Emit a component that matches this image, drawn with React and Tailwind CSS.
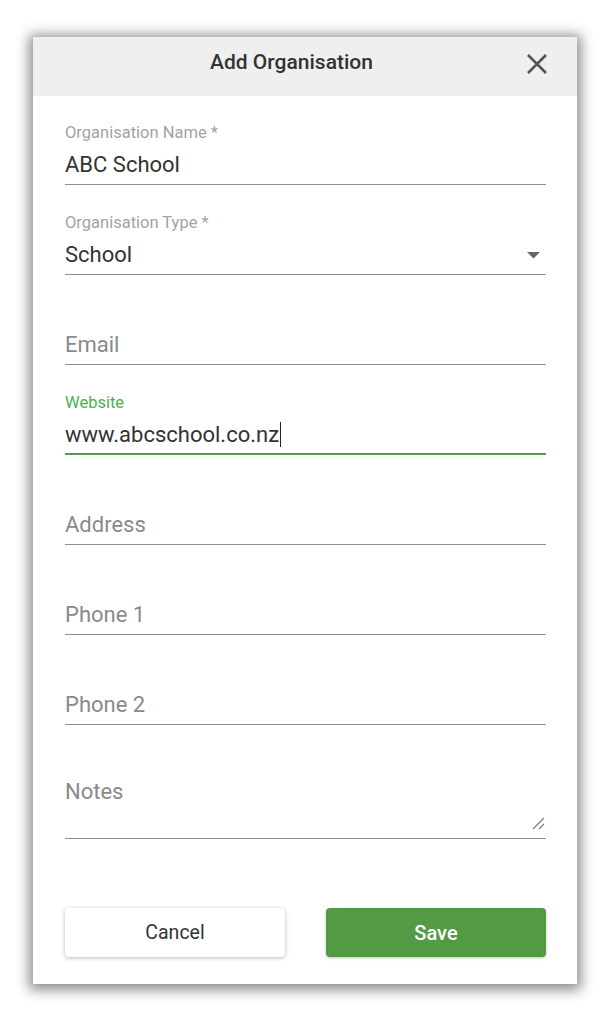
import { useState } from "react";

const font = { fontFamily: "Roboto, 'Liberation Sans', sans-serif" };

const Field = ({ label, value, placeholder, focused, select, caret }) => {
  return (
    <div className="mb-[28px]">
      <div
        className={`h-[20px] text-[16.5px] leading-[20px] ${focused ? "text-[#4caf50]" : "text-[#a3a3a3]"}`}
      >
        {label}
      </div>
      <div
        className={`mt-[3px] flex h-[39px] items-center justify-between ${focused ? "border-b-2 border-[#4e9f47]" : "border-b border-[#8f8f8f]"}`}
      >
        <div className="flex items-center text-[22px] leading-[26px]">
          {value ? (
            <span className="text-[#333]">{value}</span>
          ) : (
            <span className="text-[#8a8a8a]">{placeholder}</span>
          )}
          {caret && <span className="ml-[1px] inline-block h-[25px] w-[1px] bg-[#222]" />}
        </div>
        {select && (
          <svg width="13" height="7" viewBox="0 0 13 7" className="mr-[6px]">
            <path d="M0 0 L13 0 L6.5 6.5 Z" fill="#666" />
          </svg>
        )}
      </div>
    </div>
  );
};

export default function App() {
  const [fields] = useState([
    { label: "Organisation Name *", value: "ABC School" },
    { label: "Organisation Type *", value: "School", select: true },
    { label: "", placeholder: "Email" },
    { label: "Website", value: "www.abcschool.co.nz", focused: true, caret: true },
    { label: "", placeholder: "Address" },
    { label: "", placeholder: "Phone 1" },
    { label: "", placeholder: "Phone 2" },
  ]);

  return (
    <div className="min-h-screen bg-white pl-[33px] pt-[37px]" style={font}>
      <div className="flex h-[947px] w-[544px] flex-col bg-white shadow-[0_2px_12px_4px_rgba(0,0,0,0.45)]">
        <div className="relative flex h-[59px] items-center bg-[#efefef]">
          <div className="mb-[8px] flex-1 pr-[27px] text-center text-[21px] font-medium text-[#333]">
            Add Organisation
          </div>
          <button className="absolute right-[30px] top-[17px]">
            <svg width="20" height="20" viewBox="0 0 20 20">
              <path d="M1 1 L19 19 M19 1 L1 19" stroke="#555" strokeWidth="2.6" />
            </svg>
          </button>
        </div>

        <div className="flex flex-1 flex-col pl-[32px] pr-[31px] pt-[27px]">
          {fields.map((f, i) => (
            <Field key={i} {...f} />
          ))}

          <div>
            <div className="h-[20px]" />
            <div className="relative mt-[3px] h-[63px] border-b border-[#8f8f8f] pt-[3px]">
              <div className="text-[22px] leading-[26px] text-[#8a8a8a]">Notes</div>
              <svg width="14" height="14" viewBox="0 0 14 14" className="absolute bottom-[8px] right-[1px]">
                <path d="M13 2 L2 13 M13 8 L8 13" stroke="#777" strokeWidth="1.2" />
              </svg>
            </div>
          </div>

          <div className="mt-[69px] flex justify-between">
            <button className="h-[49px] w-[220px] rounded-[4px] bg-white text-[19.5px] text-[#333] shadow-[0_1px_4px_rgba(0,0,0,0.28)]">
              Cancel
            </button>
            <button className="h-[49px] w-[220px] rounded-[4px] bg-[#529a44] text-[20px] font-medium text-white shadow-[0_1px_3px_rgba(0,0,0,0.25)]">
              Save
            </button>
          </div>
        </div>
      </div>
    </div>
  );
}
